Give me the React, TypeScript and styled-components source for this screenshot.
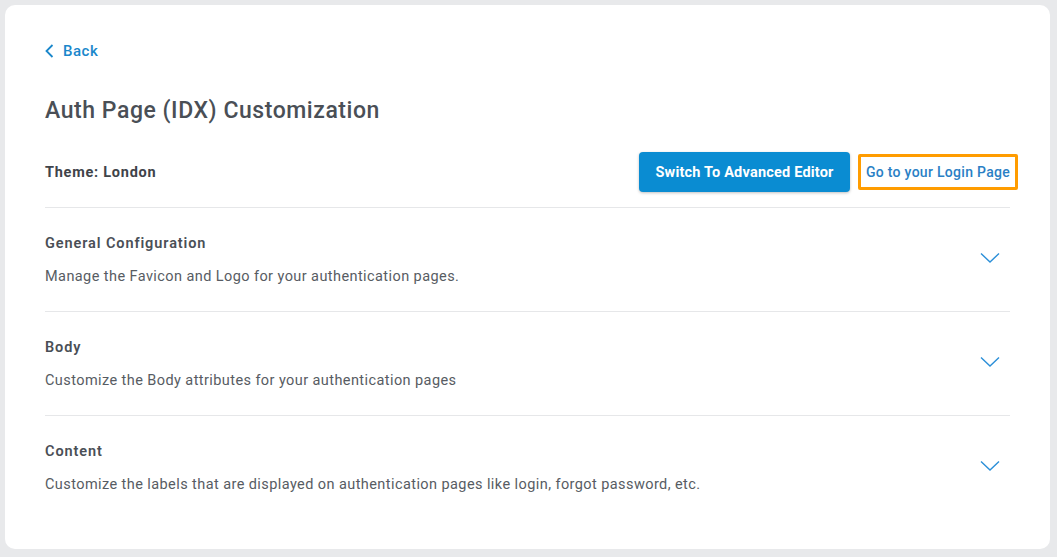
import React from "react";
import styled, { createGlobalStyle } from "styled-components";

const Global = createGlobalStyle`
  html, body { margin: 0; padding: 0; background: #e8e9eb; }
  body { font-family: Roboto, "Noto Sans", sans-serif; }
`;

const Page = styled.div`
  padding: 5px 7px 8px 5px;
  height: 557px;
  box-sizing: border-box;
`;

const Card = styled.div`
  background: #fff;
  border-radius: 10px;
  height: 544px;
  box-sizing: border-box;
  padding: 36px 40px 0 40px;
  display: flex;
  flex-direction: column;
`;

const BackLink = styled.a`
  display: flex;
  align-items: center;
  gap: 9px;
  color: #1a87cb;
  font-size: 15px;
  font-weight: 500;
  letter-spacing: 0.5px;
  height: 20px;
  text-decoration: none;
  cursor: pointer;
`;

const Title = styled.h1`
  margin: 36px 0 0 0;
  font-size: 23px;
  font-weight: 500;
  color: #4a4f56;
  line-height: 28px;
  letter-spacing: 0.55px;
`;

const ThemeRow = styled.div`
  display: flex;
  align-items: center;
  justify-content: space-between;
  margin-top: 27px;
  height: 40px;
  padding-bottom: 15px;
  border-bottom: 1px solid #e6e7e9;
`;

const ThemeLabel = styled.span`
  font-size: 14.5px;
  font-weight: 700;
  color: #3f444a;
  letter-spacing: 0.75px;
`;

const Actions = styled.div`
  display: flex;
  align-items: center;
  gap: 8px;
  margin-right: -8px;
`;

const PrimaryButton = styled.button`
  height: 40px;
  width: 211px;
  border: none;
  border-radius: 4px;
  background: #0a8cd2;
  color: #fff;
  font-family: inherit;
  font-size: 14.5px;
  font-weight: 700;
  letter-spacing: 0.2px;
  box-shadow: 0 1px 3px rgba(0, 0, 0, 0.25);
  cursor: pointer;
`;

const LoginLink = styled.a`
  display: flex;
  align-items: center;
  justify-content: center;
  box-sizing: border-box;
  width: 160px;
  height: 36px;
  border: 3px solid #ff9c00;
  border-radius: 2px;
  color: #2a7fc5;
  font-size: 14px;
  font-weight: 500;
  letter-spacing: 0.3px;
  text-decoration: none;
`;

const Section = styled.div<{ $last?: boolean }>`
  display: flex;
  align-items: center;
  justify-content: space-between;
  height: 103px;
  border-bottom: ${(p) => (p.$last ? "none" : "1px solid #e6e7e9")};
`;

const SectionText = styled.div`
  display: flex;
  flex-direction: column;
  gap: 15px;
  padding-top: 1px;
`;

const SectionTitle = styled.div`
  font-size: 14.5px;
  font-weight: 600;
  color: #4a4f56;
  letter-spacing: 0.9px;
  line-height: 18px;
`;

const SectionDesc = styled.div`
  font-size: 14.5px;
  font-weight: 400;
  color: #575c63;
  line-height: 18px;
  letter-spacing: 0.42px;
`;

const Chevron = styled.svg`
  width: 20px;
  height: 12px;
  margin: 0 10px 4px 0;
`;

const sections = [
  { title: "General Configuration", desc: "Manage the Favicon and Logo for your authentication pages." },
  { title: "Body", desc: "Customize the Body attributes for your authentication pages" },
  { title: "Content", desc: "Customize the labels that are displayed on authentication pages like login, forgot password, etc." },
];

export default function App() {
  return (
    <>
      <Global />
      <Page>
        <Card>
          <BackLink>
            <svg width="9" height="14" viewBox="0 0 9 14">
              <path d="M7.5 1 L1.5 7 L7.5 13" fill="none" stroke="#1a87cb" strokeWidth="1.8" />
            </svg>
            Back
          </BackLink>
          <Title>Auth Page (IDX) Customization</Title>
          <ThemeRow>
            <ThemeLabel>Theme: London</ThemeLabel>
            <Actions>
              <PrimaryButton>Switch To Advanced Editor</PrimaryButton>
              <LoginLink>Go to your Login Page</LoginLink>
            </Actions>
          </ThemeRow>
          {sections.map((s, i) => (
            <Section key={s.title} $last={i === sections.length - 1}>
              <SectionText>
                <SectionTitle>{s.title}</SectionTitle>
                <SectionDesc>{s.desc}</SectionDesc>
              </SectionText>
              <Chevron viewBox="0 0 20 12">
                <path d="M1 1.5 L10 10 L19 1.5" fill="none" stroke="#2b8fd8" strokeWidth="1.4" />
              </Chevron>
            </Section>
          ))}
        </Card>
      </Page>
    </>
  );
}
